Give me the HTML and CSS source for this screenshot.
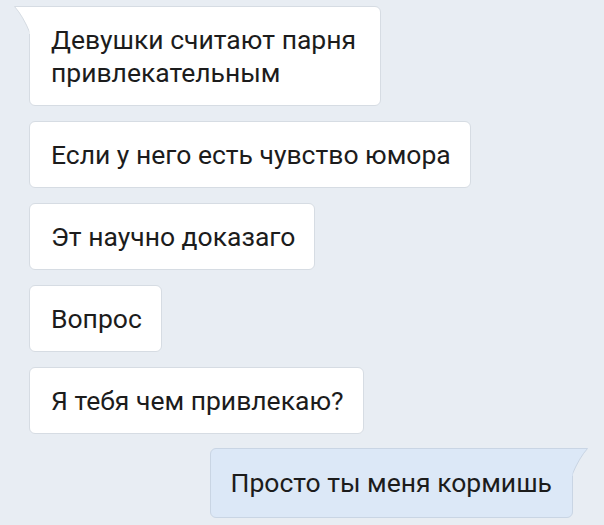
FILE: index.html
```html
<!DOCTYPE html>
<html lang="ru">
<head>
    <meta charset="UTF-8">
    <meta name="viewport" content="width=device-width, initial-scale=1.0">
    <title>Сообщения</title>
    <link rel="stylesheet" href="styles.css">
</head>
<body>
    <div class="chat">
        <div class="bubble in first">
            <svg class="tail tail-left" width="18" height="28" viewBox="0 0 18 28">
                <path d="M17 0.5 L1.5 0.5 Q10 10 17 27" fill="#ffffff" stroke="#d6dce3" stroke-width="1"/>
                <rect x="16.5" y="1" width="2" height="27" fill="#ffffff"/>
            </svg>
            <span class="text">Девушки считают парня привлекательным</span>
        </div>
        <div class="bubble in">
            <span class="text">Если у него есть чувство юмора</span>
        </div>
        <div class="bubble in">
            <span class="text">Эт научно доказаго</span>
        </div>
        <div class="bubble in">
            <span class="text">Вопрос</span>
        </div>
        <div class="bubble in">
            <span class="text">Я тебя чем привлекаю?</span>
        </div>
        <div class="bubble out">
            <svg class="tail tail-right" width="18" height="28" viewBox="0 0 18 28">
                <path d="M1 0.5 L16.5 0.5 Q8 10 1 27" fill="#dce8f7" stroke="#c9d5e4" stroke-width="1"/>
                <rect x="-0.5" y="1" width="2" height="27" fill="#dce8f7"/>
            </svg>
            <span class="text">Просто ты меня кормишь</span>
        </div>
    </div>
</body>
</html>
```

FILE: styles.css
```css
body {
    margin: 0;
    background-color: #e8edf3;
    font-family: Roboto, "Noto Sans", Arial, sans-serif;
    color: #1c1c1c;
}
.chat {
    display: flex;
    flex-direction: column;
    gap: 15px;
    padding: 6px 31px 8px 29px;
}
.bubble {
    position: relative;
    box-sizing: border-box;
    padding: 16px 19px 16px 21px;
    border-radius: 6px;
    font-size: 26.5px;
    line-height: 33px;
}
.bubble.in {
    align-self: flex-start;
    background-color: #ffffff;
    border: 1px solid #d6dce3;
}
.bubble.in.first {
    width: 352px;
    padding-bottom: 16px;
    border-top-left-radius: 0;
}
.bubble.out {
    align-self: flex-end;
    margin-top: -1px;
    background-color: #dce8f7;
    border: 1px solid #c9d5e4;
    border-top-right-radius: 0;
    padding: 17px 20px 18px 20px;
}
.tail {
    position: absolute;
    top: -1px;
}
.tail-left {
    left: -17px;
}
.tail-right {
    right: -17px;
}
```
